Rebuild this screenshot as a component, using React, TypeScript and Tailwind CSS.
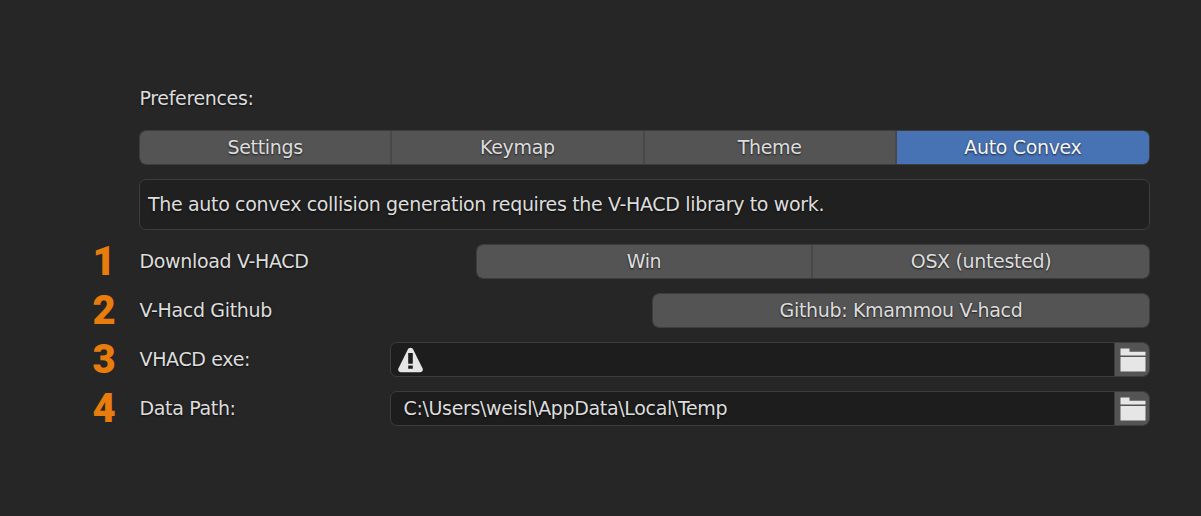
import type { ReactNode } from "react";

const textShadow = "[text-shadow:0_1px_2px_rgba(0,0,0,0.7)]";

function Tab({ children, className = "" }: { children: ReactNode; className?: string }) {
  return (
    <button
      className={`flex h-full items-center justify-center border-r-2 border-[#484848] bg-[#545454] last:border-r-0 ${textShadow} ${className}`}
    >
      {children}
    </button>
  );
}

function Row({ step, label, children }: { step: number; label: string; children: ReactNode }) {
  return (
    <div className="flex h-[35px] items-center">
      <span className="w-[47.5px] pl-[0.5px] font-['Roboto',sans-serif] text-[40px] leading-[35px] font-black tracking-normal text-[#e87d0d] [text-shadow:none]">
        {step}
      </span>
      <span className="flex-1 whitespace-nowrap">{label}</span>
      {children}
    </div>
  );
}

function WarningIcon() {
  return (
    <svg className="ml-[6px] h-[26px] w-[27px]" viewBox="0 0 27 26">
      <path
        d="M13.500 .8c1.300 0 2.200.7 2.800 1.900l9.200 18.600c.9 2-.1 3.900-2.200 3.900H3.700c-2.100 0-3.100-1.900-2.200-3.900l9.200-18.600C11.300 1.500 12.200.8 13.500.8Z"
        fill="#e6e6e6"
      />
      <path d="M11.200 6h4.600v10.800h-4.600ZM11.200 18.500h4.600v3.300h-4.600Z" fill="#1d1d1d" />
    </svg>
  );
}

function FolderIcon() {
  return (
    <svg className="h-[24px] w-[26px]" viewBox="0 0 26 24">
      <path d="M.5 0.500h9v3.300h16v3.800H.5ZM.5 9h25v14.500H.5Z" fill="#e6e6e6" />
    </svg>
  );
}

function PathField({ children }: { children: ReactNode }) {
  return (
    <div className="flex h-[35px] w-[760px] overflow-hidden rounded-[7px] border border-[#3d3d3d] bg-[#1d1d1d]">
      <div className="flex flex-1 items-center">{children}</div>
      <button className="flex w-[35px] items-center justify-center border-l border-[#3d3d3d] bg-[#545454] pl-px">
        <FolderIcon />
      </button>
    </div>
  );
}

export default function App() {
  return (
    <main className="h-[516px] w-[1201px] overflow-hidden bg-[#262626] pt-[81px] pr-[51px] pl-[92px] font-['DejaVu_Sans',sans-serif] text-[19px] tracking-[-0.34px] text-[#dddddd]">
      <div className={`ml-[47.5px] flex h-[35px] items-center ${textShadow}`}>Preferences:</div>
      <div className="mt-[14px] ml-[47px] grid h-[35px] grid-cols-4 overflow-hidden rounded-[7px] border border-[#3d3d3d]">
        <Tab>Settings</Tab>
        <Tab>Keymap</Tab>
        <Tab>Theme</Tab>
        <Tab className="bg-[#4772b3]! text-[#f4f4f4]">Auto Convex</Tab>
      </div>
      <div
        className={`mt-[14px] ml-[47px] flex h-[51px] items-center rounded-[7px] border border-[#3d3d3d] bg-[#202020] pl-[8px] whitespace-nowrap ${textShadow}`}
      >
        The auto convex collision generation requires the V-HACD library to work.
      </div>
      <div className={`mt-[14px] flex flex-col gap-[14px] ${textShadow}`}>
        <Row step={1} label="Download V-HACD">
          <div className="grid h-[35px] w-[674px] grid-cols-[336px_1fr] overflow-hidden rounded-[7px] border border-[#3d3d3d]">
            <Tab>Win</Tab>
            <Tab>OSX (untested)</Tab>
          </div>
        </Row>
        <Row step={2} label="V-Hacd Github">
          <div className="grid h-[35px] w-[498px] overflow-hidden rounded-[7px] border border-[#3d3d3d]">
            <Tab>Github: Kmammou V-hacd</Tab>
          </div>
        </Row>
        <Row step={3} label="VHACD exe:">
          <PathField>
            <WarningIcon />
          </PathField>
        </Row>
        <Row step={4} label="Data Path:">
          <PathField>
            <span className="pl-[12.5px]">C:\Users\weisl\AppData\Local\Temp</span>
          </PathField>
        </Row>
      </div>
    </main>
  );
}
